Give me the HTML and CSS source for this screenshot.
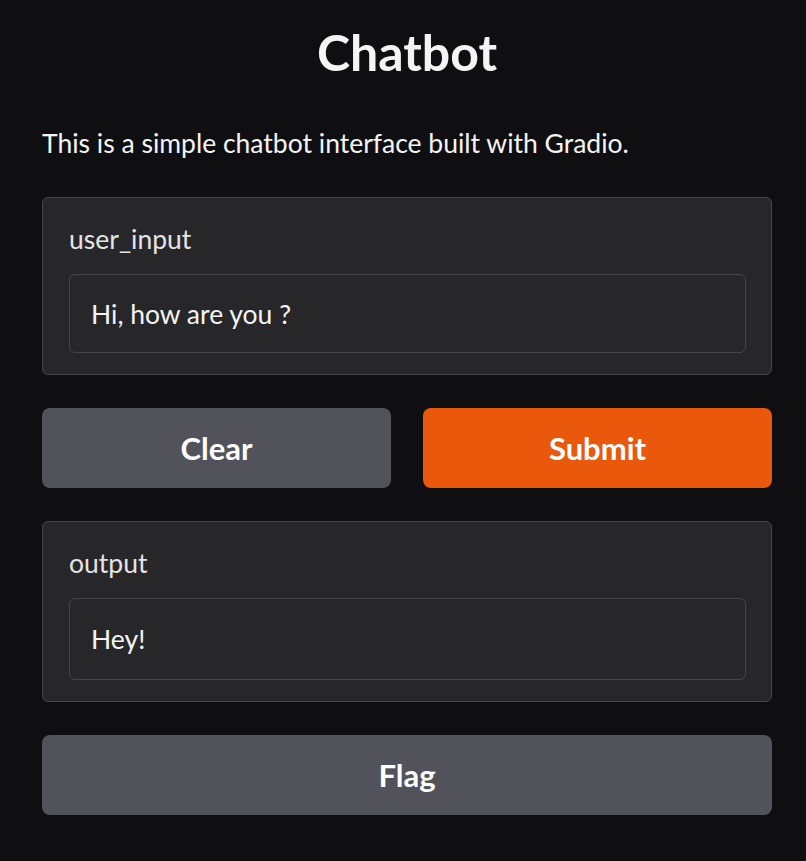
FILE: index.html
```html
<!DOCTYPE html>
<html lang="en">
<head>
<meta charset="utf-8">
<title>Chatbot</title>
<link rel="stylesheet" href="styles.css">
</head>
<body>
<main class="app">
  <h1 class="title">Chatbot</h1>
  <p class="desc">This is a simple chatbot interface built with Gradio.</p>
  <section class="block">
    <label class="label" for="ui">user_input</label>
    <div class="field" id="ui">Hi, how are you ?</div>
  </section>
  <div class="row">
    <button class="btn secondary">Clear</button>
    <button class="btn primary">Submit</button>
  </div>
  <section class="block">
    <label class="label" for="out">output</label>
    <div class="field tall" id="out">Hey!</div>
  </section>
  <button class="btn secondary">Flag</button>
</main>
</body>
</html>
```
FILE: styles.css
```css
html, body {
  margin: 0;
  padding: 0;
  background: #0f0f11;
}
body {
  font-family: Lato, "Noto Sans", sans-serif;
  color: #f4f4f5;
}
.app {
  width: 730px;
  margin-left: 42px;
  padding: 22px 0 40px;
  display: flex;
  flex-direction: column;
  gap: 33px;
}
.title {
  margin: 0;
  text-align: center;
  font-size: 50px;
  line-height: 60px;
  font-weight: 700;
  color: #f4f4f5;
}
.desc {
  margin: 10px 0 3px;
  font-size: 26.5px;
  line-height: 36px;
  color: #f4f4f5;
}
.block {
  background: #27272a;
  border: 1px solid #45454c;
  border-radius: 6px;
  padding: 25px 25px 21px 26px;
  display: flex;
  flex-direction: column;
}
.label {
  font-size: 26.5px;
  line-height: 32px;
  color: #e4e4e7;
  margin-bottom: 19px;
}
.field {
  height: 77px;
  border: 1px solid #45454c;
  border-radius: 6px;
  background: #27272a;
  padding: 0 21px;
  display: flex;
  align-items: center;
  font-size: 26.5px;
  color: #f4f4f5;
}
.field.tall {
  height: 80px;
}
.row {
  display: grid;
  grid-template-columns: 1fr 1fr;
  gap: 32px;
}
.btn {
  height: 80px;
  border: none;
  border-radius: 8px;
  font-family: Lato, "Noto Sans", sans-serif;
  font-size: 31px;
  font-weight: 700;
  color: #ffffff;
  cursor: pointer;
}
.secondary {
  background: #52525b;
}
.primary {
  background: #ea580c;
}
```
